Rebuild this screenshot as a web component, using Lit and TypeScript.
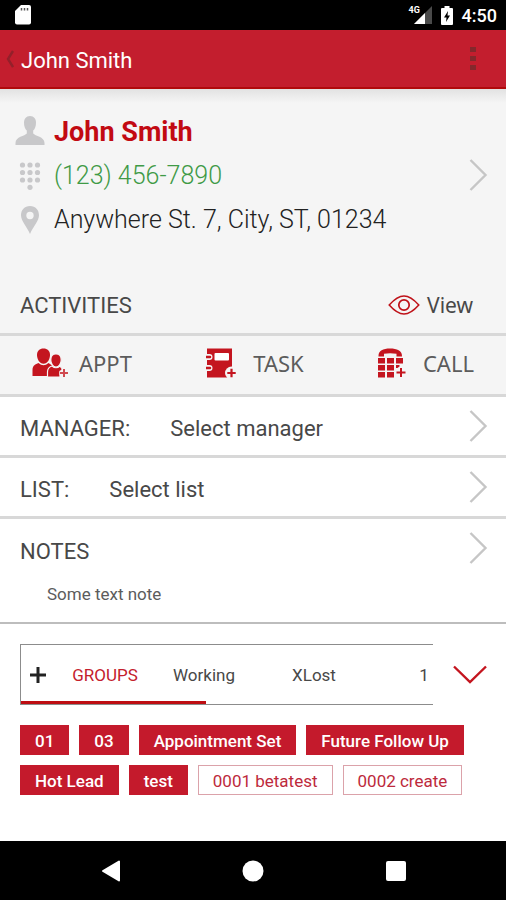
import { LitElement, html, css, svg } from "lit";
import { customElement, property, state } from "lit/decorators.js";
import { classMap } from "lit/directives/class-map.js";

const chevron = html`<svg class="chevron" width="20" height="34" viewBox="0 0 20 34" aria-hidden="true">
  <path d="M2.500 2 L17.500 17 L2.500 32" fill="none" stroke="#c6c6c6" stroke-width="2.4" />
</svg>`;

const sdCard = html`<svg width="16" height="20" viewBox="0 0 16 20" aria-hidden="true">
  <path d="M6 0H14Q16 0 16 2V17.500Q16 19.500 14 19.500H2Q0 19.500 0 17.500V6Z" fill="#fff" />
  <path d="M6.500 3V5.500M9.500 3V5.500M12.500 3V5.500" stroke="#555" stroke-width="1.500" />
</svg>`;

const signal = html`<svg width="18" height="18" viewBox="0 0 18 18" aria-hidden="true">
  <path d="M18 0V18H0Z" fill="#4a4a4a" />
  <path d="M11 7V18H0Z" fill="#fff" />
</svg>`;

const battery = html`<svg width="12" height="19" viewBox="0 0 12 19" aria-hidden="true">
  <path d="M3.500 0H8.500V2H11Q12 2 12 3V18Q12 19 11 19H1Q0 19 0 18V3Q0 2 1 2H3.500Z" fill="#fff" />
  <path d="M7 5L3 11.500H5.500L5 16L9 9.500H6.500Z" fill="#000" />
</svg>`;

const person = html`<svg width="30" height="30" viewBox="0 0 30 30" aria-hidden="true">
  <path d="M15 0C19 0 21 3 21 6.500C21 10.500 20 12.800 18.200 14.600V17.500C20 20 29.500 20.500 29.500 27V29H0.500V27C0.500 20.500 10 20 11.800 17.500V14.600C10 12.800 9 10.500 9 6.500C9 3 11 0 15 0Z" fill="#c8c8ca" />
</svg>`;

const keypad = html`<svg width="22" height="28" viewBox="0 0 22 28" aria-hidden="true">
  ${[
    [3.5, 3], [11, 3], [18.5, 3],
    [3.5, 10.5], [11, 10.5], [18.5, 10.5],
    [3.5, 18], [11, 18], [18.5, 18],
    [11, 25.3],
  ].map(([x, y]) => svg`<circle cx=${x} cy=${y} r="2.600" fill="#c8c8ca" />`)}
</svg>`;

const pin = html`<svg width="20" height="28" viewBox="0 0 20 28" aria-hidden="true">
  <path fill-rule="evenodd" d="M10 0C15.500 0 19 4 19 9.300C19 15 13.500 20 10 28C6.500 20 1 15 1 9.300C1 4 4.500 0 10 0ZM10 5.800A3.700 3.700 0 1 0 10 13.200A3.700 3.700 0 1 0 10 5.800Z" fill="#c8c8ca" />
</svg>`;

const eye = html`<svg width="32" height="20" viewBox="0 0 32 20" aria-hidden="true">
  <path d="M1.200 10C7 3.500 11 1 16 1S25 3.500 30.800 10C25 16.500 21 19 16 19S7 16.500 1.200 10Z" fill="none" stroke="#bf1118" stroke-width="1.500" />
  <circle cx="16" cy="10" r="5.200" fill="none" stroke="#bf1118" stroke-width="1.700" />
</svg>`;

const people = html`<svg width="36" height="30" viewBox="0 0 36 30" aria-hidden="true">
  <path d="M11.500 0.500C15.500 0.500 18 3 18 7C18 11 15.500 15.800 11.500 15.800S5 11 5 7C5 3 7.500 0.500 11.500 0.500Z" fill="#c4151f" />
  <path d="M0.500 28V22C0.500 17.500 3.500 16 6.500 15Q11.500 19.500 16.500 15L21 18V28Z" fill="#c4151f" />
  <path d="M24 6C27.400 6 29.200 8.300 29.200 12C29.200 15.500 27 19 24 19S18.800 15.500 18.800 12C18.800 8.300 20.600 6 24 6Z" fill="#c4151f" stroke="#f5f5f5" stroke-width="1.200" />
  <path d="M15.500 29V24C15.500 20 17.500 18.800 20 18Q24 21.500 28 18L30.500 21L28 24V29Z" fill="#c4151f" stroke="#f5f5f5" stroke-width="1.200" />
  <path d="M32 20.500V29.500M27.500 25H36" stroke="#f5f5f5" stroke-width="4.500" />
  <path d="M32 21V29M28 25H36" stroke="#d04a50" stroke-width="2" />
</svg>`;

const notebook = html`<svg width="32" height="30" viewBox="0 0 32 30" aria-hidden="true">
  <path d="M1 0.500H26V29.500H1Z" fill="#c4151f" />
  <rect x="8.500" y="5" width="14.500" height="7.500" rx="1" fill="#fff" />
  <path d="M-1 9H3.500M-1 20H3.500" stroke="#f5f5f5" stroke-width="6" stroke-linecap="round" />
  <path d="M0.500 9H4M0.500 20H4" stroke="#c4151f" stroke-width="2.600" stroke-linecap="round" />
  <circle cx="25.500" cy="25" r="6.500" fill="#f5f5f5" />
  <path d="M25.500 20.800V29.200M21.300 25H29.700" stroke="#c4151f" stroke-width="2.200" />
</svg>`;

const phone = html`<svg width="30" height="30" viewBox="0 0 30 30" aria-hidden="true">
  <path d="M0.500 8C0.500 2.500 5 0.500 12 0.500S24 2.500 24 8V8.500H18.500V5.800Q12 4.800 6 5.800V8.500H0.500Z" fill="#c4151f" />
  ${[
    [0, 10], [9, 10], [18, 10],
    [0, 17], [9, 17],
    [0, 24], [9, 24],
  ].map(([x, y]) => svg`<rect x=${x} y=${y} width="7" height="5.500" fill="#c4151f" />`)}
  <path d="M18 17H21.500V18.500L19.500 20H18Z" fill="#c4151f" />
  <path d="M23 20V29M18.500 24.500H27.500" stroke="#c4151f" stroke-width="2" />
</svg>`;

const shared = css`
  * {
    box-sizing: border-box;
  }
  button {
    font: inherit;
    color: inherit;
    background: none;
    border: 0;
    border-radius: 0;
    padding: 0;
    margin: 0;
    text-align: left;
    cursor: pointer;
  }
  svg {
    display: block;
    flex: none;
  }
`;

@customElement("status-bar")
export class StatusBar extends LitElement {
  static styles = [
    shared,
    css`
      :host {
        display: flex;
        align-items: center;
        justify-content: space-between;
        height: 30px;
        padding: 0 9px 0 15px;
        background: #000;
        color: #fff;
      }
      .right {
        display: flex;
        align-items: center;
        gap: 9px;
      }
      .network {
        display: flex;
        position: relative;
        padding-left: 5px;
      }
      .kind {
        position: absolute;
        left: 0;
        top: 0;
        font-size: 9px;
        line-height: 9px;
        font-weight: 700;
      }
      .time {
        font-size: 18px;
        line-height: 28px;
        padding-top: 2px;
        font-weight: 500;
      }
    `,
  ];

  render() {
    return html`
      ${sdCard}
      <div class="right">
        <span class="network"><span class="kind">4G</span>${signal}</span>
        ${battery}
        <span class="time">4:50</span>
      </div>
    `;
  }
}

@customElement("select-row")
export class SelectRow extends LitElement {
  @property() label = "";
  @property() value = "";

  static styles = [
    shared,
    css`
      :host {
        display: block;
        border-bottom: 3px solid #d8d8d8;
      }
      .row {
        display: flex;
        align-items: center;
        width: 100%;
        height: 58px;
        padding: 0 18px 0 20px;
      }
      .label,
      .value {
        font-size: 22px;
        line-height: 30px;
        padding-top: 6px;
      }
      .label {
        margin-right: 40px;
      }
      .value {
        flex: 1;
      }
    `,
  ];

  render() {
    return html`<button class="row">
      <span class="label">${this.label}</span>
      <span class="value">${this.value}</span>
      ${chevron}
    </button>`;
  }
}

@customElement("group-picker")
export class GroupPicker extends LitElement {
  @state() private active = 0;

  private tabs = ["GROUPS", "Working", "XLost", "1"];
  private tags = [
    { name: "01", on: true },
    { name: "03", on: true },
    { name: "Appointment Set", on: true },
    { name: "Future Follow Up", on: true },
    { name: "Hot Lead", on: true },
    { name: "test", on: true },
    { name: "0001 betatest", on: false },
    { name: "0002 create", on: false },
  ];

  static styles = [
    shared,
    css`
      :host {
        display: block;
        padding: 20px 19px 20px 20px;
      }
      .top {
        display: flex;
        align-items: center;
        gap: 20px;
      }
      .tabs {
        flex: 1;
        min-width: 0;
        display: flex;
        align-items: center;
        position: relative;
        height: 61px;
        overflow: hidden;
        border: 1px solid #8c8c8c;
        border-right: 0;
      }
      .marker {
        position: absolute;
        left: 0;
        bottom: 0;
        width: 45%;
        height: 3px;
        background: #be0d12;
      }
      .add {
        padding: 0 14px 0 8px;
      }
      .tab {
        flex: none;
        width: 110px;
        text-align: center;
        font-size: 17px;
        line-height: 24px;
      }
      .tab.first {
        width: 88px;
      }
      .tab.active {
        color: #c4202c;
      }
      .tags {
        display: flex;
        flex-wrap: wrap;
        gap: 10px;
        margin-top: 20px;
      }
      .tag {
        height: 30px;
        padding: 2px 14px 0;
        border: 1px solid #dba2aa;
        background: #fff;
        color: #bd2a3c;
        font-size: 17px;
        line-height: 26px;
      }
      .tag.on {
        border-color: #c41a2c;
        background: #c41a2c;
        color: #fff;
        font-weight: 500;
      }
    `,
  ];

  render() {
    return html`
      <div class="top">
        <div class="tabs">
          <button class="add" aria-label="Add group">
            <svg width="18" height="18" viewBox="0 0 18 18" aria-hidden="true">
              <path d="M9 1V17M1 9H17" stroke="#222" stroke-width="3" />
            </svg>
          </button>
          ${this.tabs.map(
            (name, i) => html`<button
              class=${classMap({ tab: true, first: i === 0, active: i === this.active })}
              @click=${() => (this.active = i)}
            >
              ${name}
            </button>`,
          )}
          <span class="marker"></span>
        </div>
        <button aria-label="Show all groups">
          <svg width="34" height="20" viewBox="0 0 34 20" aria-hidden="true">
            <path d="M1 1.500L17 17L33 1.500" fill="none" stroke="#c4151f" stroke-width="2.400" />
          </svg>
        </button>
      </div>
      <div class="tags">
        ${this.tags.map(
          (t) => html`<button class=${classMap({ tag: true, on: t.on })} aria-pressed=${t.on}>${t.name}</button>`,
        )}
      </div>
    `;
  }
}

@customElement("nav-bar")
export class NavBar extends LitElement {
  static styles = [
    shared,
    css`
      :host {
        display: flex;
        justify-content: center;
        height: 59px;
        background: #000;
      }
      .key {
        display: flex;
        align-items: center;
        justify-content: center;
        width: 143px;
      }
    `,
  ];

  render() {
    return html`
      <button class="key" aria-label="Back">
        <svg width="20" height="22" viewBox="0 0 20 22" aria-hidden="true">
          <path d="M19 1.500V20.500L3 11Z" fill="#fff" stroke="#fff" stroke-width="2" stroke-linejoin="round" />
        </svg>
      </button>
      <button class="key" aria-label="Home">
        <svg width="22" height="22" viewBox="0 0 22 22" aria-hidden="true"><circle cx="11" cy="11" r="10.500" fill="#fff" /></svg>
      </button>
      <button class="key" aria-label="Recent apps">
        <svg width="20" height="20" viewBox="0 0 20 20" aria-hidden="true"><rect width="20" height="20" rx="2" fill="#fff" /></svg>
      </button>
    `;
  }
}

@customElement("app-root")
export class AppRoot extends LitElement {
  static styles = [
    shared,
    css`
      :host {
        display: flex;
        flex-direction: column;
        min-height: 100vh;
        background: #fff;
        color: #484848;
        font-family: Roboto, "Noto Sans", sans-serif;
      }
      .bar {
        display: flex;
        align-items: center;
        height: 59px;
        padding: 0 28px 0 6px;
        background: #c31e2e;
        border-bottom: 2px solid #b00a0c;
        color: #fff;
      }
      .title {
        flex: 1;
        margin: 0 0 0 7px;
        font-size: 22px;
        line-height: 30px;
        font-weight: 400;
        padding-top: 4px;
      }
      .contact {
        background: linear-gradient(#e2e2e2, #f5f5f5 14px);
        padding: 19px 18px 0 15px;
        display: flex;
        align-items: center;
      }
      .lines {
        flex: 1;
      }
      .line {
        display: grid;
        grid-template-columns: 29px 1fr;
        gap: 10px;
        align-items: center;
        justify-items: center;
        height: 44px;
      }
      .line.first {
        height: 46px;
      }
      .text {
        justify-self: start;
        margin: 0;
        font-size: 25px;
        line-height: 32px;
        font-weight: 300;
      }
      .name {
        font-size: 27px;
        font-weight: 700;
        color: #c20a12;
        padding-top: 2px;
      }
      .tel {
        color: #3f9a46;
        text-decoration: none;
      }
      .address {
        color: #222;
      }
      .heading {
        margin: 0;
        font-size: 22px;
        line-height: 30px;
        font-weight: 400;
      }
      .activities {
        display: flex;
        align-items: center;
        justify-content: space-between;
        padding: 48px 33px 13px 20px;
        background: #f5f5f5;
        border-bottom: 3px solid #d8d8d8;
      }
      .view {
        display: flex;
        align-items: center;
        gap: 7px;
        font-family: "Noto Sans", sans-serif;
        font-size: 21px;
        line-height: 30px;
      }
      .activities .heading {
        padding-top: 2px;
        line-height: 28px;
      }
      .actions {
        display: flex;
        align-items: center;
        justify-content: space-between;
        height: 61px;
        padding: 0 32px 4px;
        background: #f5f5f5;
        border-bottom: 3px solid #d8d8d8;
      }
      .action {
        display: flex;
        align-items: center;
        gap: 11px;
        font-family: "Noto Sans", sans-serif;
        font-size: 22px;
        line-height: 30px;
        color: #5c5c5c;
      }
      .action.wide {
        gap: 15px;
      }
      .notes {
        width: 100%;
        padding: 12px 18px 16px 20px;
        border-bottom: 2px solid #bdbdbd;
      }
      .notes-head {
        display: flex;
        align-items: center;
        justify-content: space-between;
      }
      .notes-head .heading {
        padding-top: 8px;
        line-height: 26px;
      }
      .note {
        margin: 0;
        padding: 17px 0 0 27px;
        font-size: 17px;
        line-height: 24px;
        color: #5c5c5c;
      }
      .fill {
        flex: 1;
      }
    `,
  ];

  render() {
    return html`
      <status-bar></status-bar>
      <header class="bar">
        <button aria-label="Back">
          <svg width="8" height="18" viewBox="0 0 8 18" aria-hidden="true">
            <path d="M7 1L2 9L7 17" fill="none" stroke="#93202a" stroke-width="2.400" />
          </svg>
        </button>
        <h1 class="title">John Smith</h1>
        <button aria-label="More options">
          <svg width="10" height="26" viewBox="0 0 10 26" aria-hidden="true">
            <path d="M2 1H8V6H2ZM2 10H8V15H2ZM2 19H8V24H2Z" fill="#84282c" />
          </svg>
        </button>
      </header>
      <section class="contact">
        <div class="lines">
          <div class="line first">${person}<h2 class="text name">John Smith</h2></div>
          <div class="line">${keypad}<a class="text tel" href="tel:1234567890">(123) 456-7890</a></div>
          <div class="line">${pin}<span class="text address">Anywhere St. 7, City, ST, 01234</span></div>
        </div>
        <button aria-label="Open contact">${chevron}</button>
      </section>
      <section class="activities">
        <h2 class="heading">ACTIVITIES</h2>
        <button class="view">${eye}View</button>
      </section>
      <div class="actions">
        <button class="action">${people}APPT</button>
        <button class="action wide">${notebook}TASK</button>
        <button class="action wide">${phone}CALL</button>
      </div>
      <select-row label="MANAGER:" value="Select manager"></select-row>
      <select-row label="LIST:" value="Select list"></select-row>
      <section class="notes">
        <div class="notes-head">
          <h2 class="heading">NOTES</h2>
          <button aria-label="Open notes">${chevron}</button>
        </div>
        <p class="note">Some text note</p>
      </section>
      <group-picker></group-picker>
      <div class="fill"></div>
      <nav-bar></nav-bar>
    `;
  }
}
